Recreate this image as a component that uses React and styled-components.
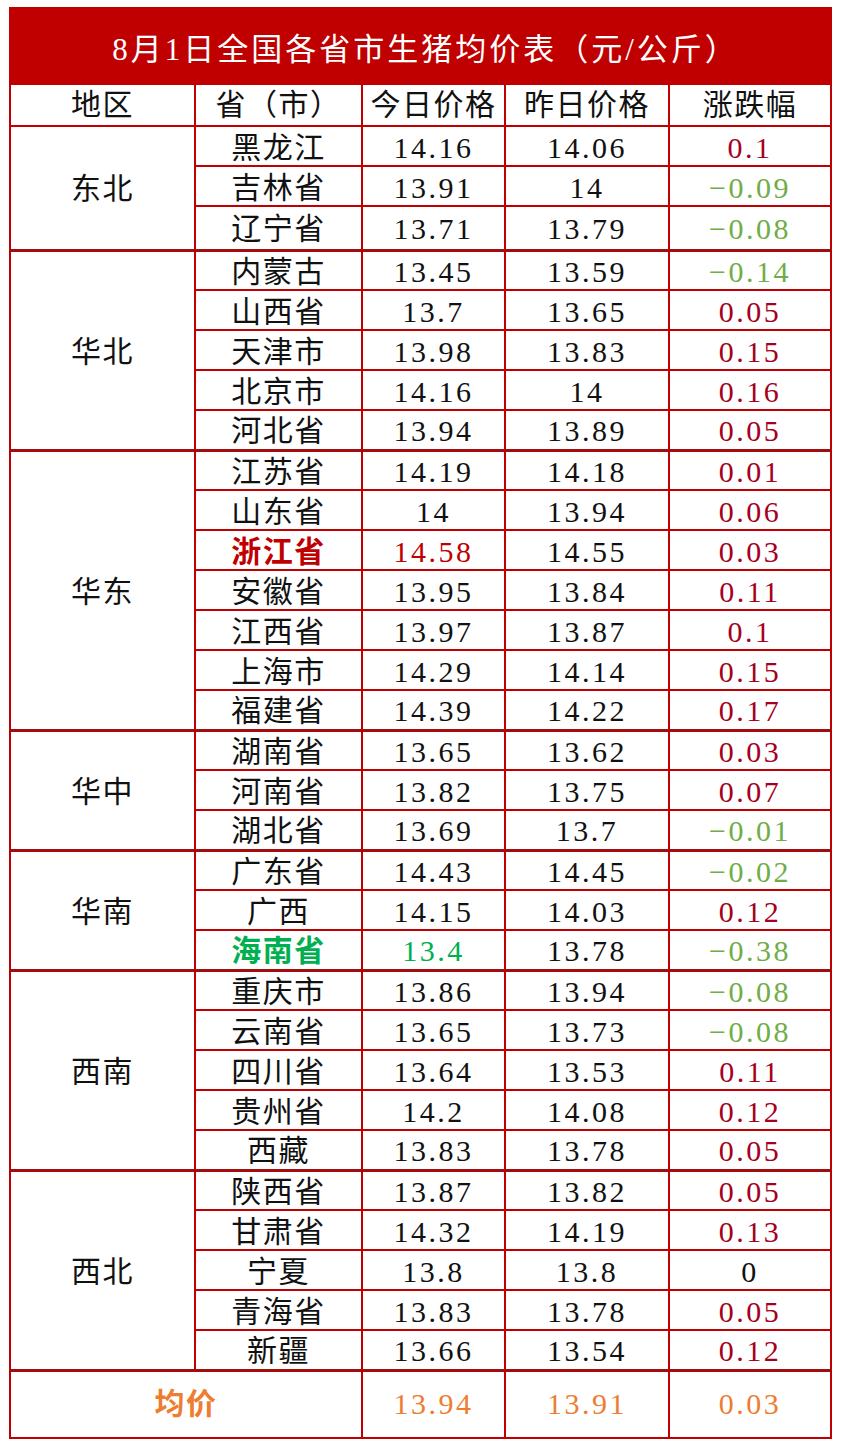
import styled, { createGlobalStyle } from "styled-components";

const GlobalStyle = createGlobalStyle`
  body {
    margin: 0;
    background: #ffffff;
    font-family: "Liberation Serif", "Noto Sans CJK SC", serif;
  }
`;

const Page = styled.div`
  padding: 7px 0 0 9px;
`;

const Table = styled.table`
  width: 821px;
  border-collapse: collapse;
  table-layout: fixed;
  font-size: 30px;
  letter-spacing: 1.5px;
  color: #111;
`;

const TitleCell = styled.th`
  height: 68px;
  background: #c00000;
  color: #ffffff;
  font-weight: normal;
  font-size: 31px;
  letter-spacing: 3px;
  line-height: 1;
  padding: 6px 0 0 10px;
  border: 2px solid #c00000;
`;

const HeadCell = styled.th`
  height: 40px;
  font-weight: normal;
  padding: 0;
  border: 2px solid #c00000;
  line-height: 1;
`;

const Row = styled.tr`
  height: ${(p) => p.$h || 40}px;
`;

const Cell = styled.td`
  padding: 3px 0 0;
  text-align: center;
  line-height: 1;
  letter-spacing: ${(p) => (p.$num ? "2.5px" : "1.5px")};
  border: 2px solid #c00000;
  border-top: ${(p) => (p.$groupStart ? "3px solid #a30d0d" : "2px solid #c00000")};
  color: ${(p) => p.$color || "#111"};
  font-weight: ${(p) => (p.$bold ? "bold" : "normal")};
`;

const AvgRow = styled.tr`
  height: 68px;
`;

const AvgCell = styled.td`
  text-align: center;
  line-height: 1;
  letter-spacing: ${(p) => (p.$num ? "2.5px" : "1.5px")};
  color: #ed7d31;
  font-weight: ${(p) => (p.$num ? "normal" : "bold")};
  border: 2px solid #c00000;
  border-top: 3px solid #a30d0d;
`;

const RED = "#a50021";
const GREEN = "#70ad47";

const groups = [
  {
    name: "东北",
    rows: [
      ["黑龙江", "14.16", "14.06", "0.1"],
      ["吉林省", "13.91", "14", "-0.09"],
      ["辽宁省", "13.71", "13.79", "-0.08"],
    ],
  },
  {
    name: "华北",
    rows: [
      ["内蒙古", "13.45", "13.59", "-0.14"],
      ["山西省", "13.7", "13.65", "0.05"],
      ["天津市", "13.98", "13.83", "0.15"],
      ["北京市", "14.16", "14", "0.16"],
      ["河北省", "13.94", "13.89", "0.05"],
    ],
  },
  {
    name: "华东",
    rows: [
      ["江苏省", "14.19", "14.18", "0.01"],
      ["山东省", "14", "13.94", "0.06"],
      ["浙江省", "14.58", "14.55", "0.03", "#c00000"],
      ["安徽省", "13.95", "13.84", "0.11"],
      ["江西省", "13.97", "13.87", "0.1"],
      ["上海市", "14.29", "14.14", "0.15"],
      ["福建省", "14.39", "14.22", "0.17"],
    ],
  },
  {
    name: "华中",
    rows: [
      ["湖南省", "13.65", "13.62", "0.03"],
      ["河南省", "13.82", "13.75", "0.07"],
      ["湖北省", "13.69", "13.7", "-0.01"],
    ],
  },
  {
    name: "华南",
    rows: [
      ["广东省", "14.43", "14.45", "-0.02"],
      ["广西", "14.15", "14.03", "0.12"],
      ["海南省", "13.4", "13.78", "-0.38", "#00b050"],
    ],
  },
  {
    name: "西南",
    rows: [
      ["重庆市", "13.86", "13.94", "-0.08"],
      ["云南省", "13.65", "13.73", "-0.08"],
      ["四川省", "13.64", "13.53", "0.11"],
      ["贵州省", "14.2", "14.08", "0.12"],
      ["西藏", "13.83", "13.78", "0.05"],
    ],
  },
  {
    name: "西北",
    rows: [
      ["陕西省", "13.87", "13.82", "0.05"],
      ["甘肃省", "14.32", "14.19", "0.13"],
      ["宁夏", "13.8", "13.8", "0"],
      ["青海省", "13.83", "13.78", "0.05"],
      ["新疆", "13.66", "13.54", "0.12"],
    ],
  },
];

const changeColor = (v) => {
  const n = parseFloat(v);
  if (n > 0) return RED;
  if (n < 0) return GREEN;
  return "#111";
};

const fmt = (v) => (v.startsWith("-") ? "\u2212" + v.slice(1) : v);

export default function App() {
  return (
    <Page>
      <GlobalStyle />
      <Table>
        <colgroup>
          <col style={{ width: 185 }} />
          <col style={{ width: 167 }} />
          <col style={{ width: 143 }} />
          <col style={{ width: 164 }} />
          <col style={{ width: 162 }} />
        </colgroup>
        <thead>
          <tr>
            <TitleCell colSpan={5}>8月1日全国各省市生猪均价表（元/公斤）</TitleCell>
          </tr>
          <tr>
            <HeadCell>地区</HeadCell>
            <HeadCell>省（市）</HeadCell>
            <HeadCell>今日价格</HeadCell>
            <HeadCell>昨日价格</HeadCell>
            <HeadCell>涨跌幅</HeadCell>
          </tr>
        </thead>
        <tbody>
          {groups.map((g, gi) =>
            g.rows.map(([prov, today, yest, chg, hl], i) => {
              const start = gi > 0 && i === 0;
              return (
                <Row key={prov} $h={gi === 0 && i === 2 ? 44 : 40}>
                  {i === 0 && (
                    <Cell rowSpan={g.rows.length} $groupStart={gi > 0}>
                      {g.name}
                    </Cell>
                  )}
                  <Cell $groupStart={start} $color={hl} $bold={!!hl}>
                    {prov}
                  </Cell>
                  <Cell $num $groupStart={start} $color={hl}>
                    {today}
                  </Cell>
                  <Cell $num $groupStart={start}>
                    {yest}
                  </Cell>
                  <Cell $num $groupStart={start} $color={changeColor(chg)}>
                    {fmt(chg)}
                  </Cell>
                </Row>
              );
            })
          )}
          <AvgRow>
            <AvgCell colSpan={2}>均价</AvgCell>
            <AvgCell $num>13.94</AvgCell>
            <AvgCell $num>13.91</AvgCell>
            <AvgCell $num>0.03</AvgCell>
          </AvgRow>
        </tbody>
      </Table>
    </Page>
  );
}
